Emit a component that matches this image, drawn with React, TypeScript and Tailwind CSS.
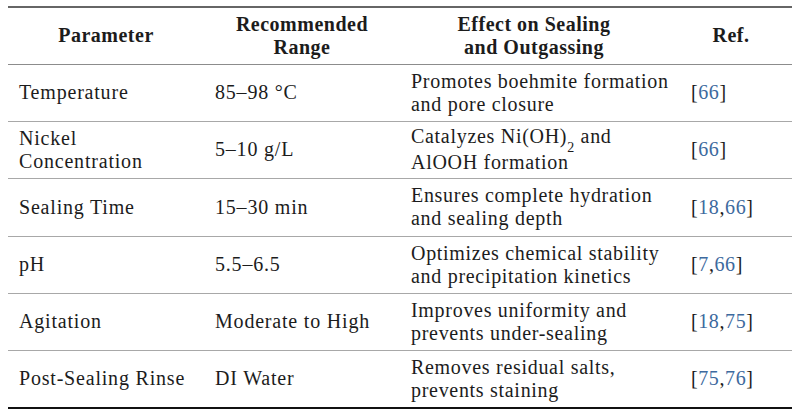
import React from "react";

const rows: { p: React.ReactNode; r: string; e: React.ReactNode; refs: string[] }[] = [
  { p: "Temperature", r: "85–98 °C", e: <>Promotes boehmite formation<br />and pore closure</>, refs: ["66"] },
  { p: <>Nickel<br />Concentration</>, r: "5–10 g/L", e: <>Catalyzes Ni(OH)<sub className="text-[14px] align-[-5px] leading-none">2</sub> and<br />AlOOH formation</>, refs: ["66"] },
  { p: "Sealing Time", r: "15–30 min", e: <>Ensures complete hydration<br />and sealing depth</>, refs: ["18", "66"] },
  { p: "pH", r: "5.5–6.5", e: <>Optimizes chemical stability<br />and precipitation kinetics</>, refs: ["7", "66"] },
  { p: "Agitation", r: "Moderate to High", e: <>Improves uniformity and<br />prevents under-sealing</>, refs: ["18", "75"] },
  { p: "Post-Sealing Rinse", r: "DI Water", e: <>Removes residual salts,<br />prevents staining</>, refs: ["75", "76"] },
];

export default function App() {
  return (
    <div className="w-[800px] h-[419px] bg-white pt-[6px] px-[8px] text-[#1c1c1c]" style={{ fontFamily: '"Liberation Serif", "Times New Roman", serif' }}>
      <table className="w-[784px] border-collapse table-fixed">
        <colgroup>
          <col className="w-[196px]" />
          <col className="w-[196px]" />
          <col className="w-[280px]" />
          <col className="w-[112px]" />
        </colgroup>
        <thead>
          <tr className="border-t-2 border-t-[#666666] border-b-[1.5px] border-b-[#8c8c8c]">
            <th className="h-[57px] p-0 text-center font-bold text-[20px] leading-[23px] tracking-[0.5px] align-middle">Parameter</th>
            <th className="h-[57px] p-0 text-center font-bold text-[20px] leading-[23px] tracking-[0.5px] align-middle">Recommended<br />Range</th>
            <th className="h-[57px] p-0 pr-[12px] text-center font-bold text-[20px] leading-[23px] tracking-[0.5px] align-middle">Effect on Sealing<br />and Outgassing</th>
            <th className="h-[57px] p-0 pr-[10px] text-center font-bold text-[20px] leading-[23px] tracking-[0.5px] align-middle">Ref.</th>
          </tr>
        </thead>
        <tbody>
          {rows.map((row, i) => {
            const h = i === 2 || i === rows.length - 1 ? "h-[58px]" : "h-[57px]";
            return (
              <tr key={i} className={i === rows.length - 1 ? "border-b-2 border-b-[#111111]" : "border-b border-b-[#a8a8a8]"}>
                <td className={`${h} p-0 pl-[11px] text-[20px] leading-[23px] tracking-[0.8px] align-middle whitespace-nowrap`}>{row.p}</td>
                <td className={`${h} p-0 pl-[11px] text-[20px] leading-[23px] tracking-[0.8px] align-middle whitespace-nowrap`}>{row.r}</td>
                <td className={`${h} p-0 pl-[11px] text-[20px] leading-[23px] tracking-[0.7px] align-middle whitespace-nowrap`}>{row.e}</td>
                <td className={`${h} p-0 pl-[11px] text-[20px] leading-[23px] tracking-[0.6px] align-middle whitespace-nowrap`}>
                  [
                  {row.refs.map((r, j) => (
                    <React.Fragment key={j}>
                      {j > 0 && ","}
                      <span className="text-[#3d6a9e]">{r}</span>
                    </React.Fragment>
                  ))}
                  ]
                </td>
              </tr>
            );
          })}
        </tbody>
      </table>
    </div>
  );
}
